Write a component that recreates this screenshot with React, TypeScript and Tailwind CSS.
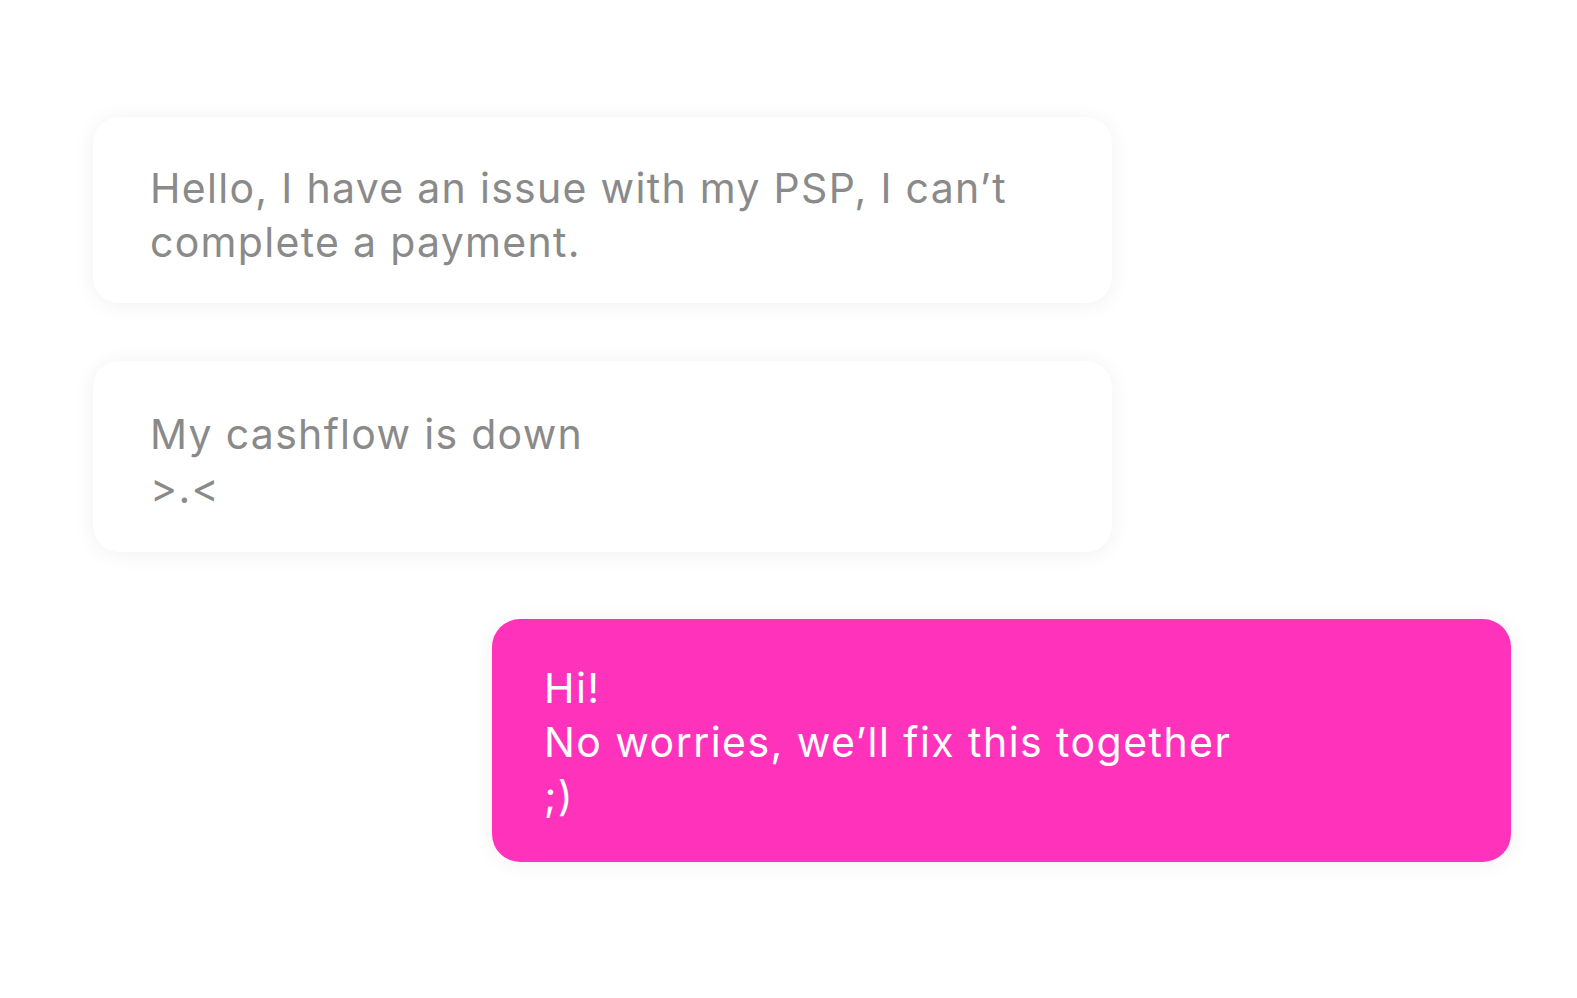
import React from "react";

export default function App() {
  return (
    <div
      className="w-[1577px] h-[998px] bg-white overflow-hidden"
      style={{ fontFamily: "Inter, 'Noto Sans', sans-serif" }}
    >
      <div className="flex flex-col items-start pl-[93px] pt-[117px] w-[1511px]">
        <div className="w-[1019px] bg-white rounded-[26px] shadow-[0_2px_22px_rgba(0,0,0,0.06)] pl-[57px] pr-[40px] pt-[44px] pb-[34px] text-[41px] leading-[54px] tracking-[1.3px] text-[#8a8a8a]">
          <div>Hello, I have an issue with my PSP, I can’t</div>
          <div>complete a payment.</div>
        </div>
        <div className="mt-[58px] w-[1019px] bg-white rounded-[26px] shadow-[0_2px_22px_rgba(0,0,0,0.06)] pl-[57px] pr-[40px] pt-[46px] pb-[37px] text-[41px] leading-[54px] tracking-[1.3px] text-[#8a8a8a]">
          <div>My cashflow is down</div>
          <div>&gt;.&lt;</div>
        </div>
        <div className="mt-[67px] self-end w-[1019px] bg-[#ff33bb] rounded-[28px] shadow-[0_2px_22px_rgba(0,0,0,0.06)] pl-[52px] pr-[40px] pt-[42px] pb-[39px] text-[41px] leading-[54px] tracking-[1.45px] text-white">
          <div>Hi!</div>
          <div>No worries, we’ll fix this together</div>
          <div>;)</div>
        </div>
      </div>
    </div>
  );
}
